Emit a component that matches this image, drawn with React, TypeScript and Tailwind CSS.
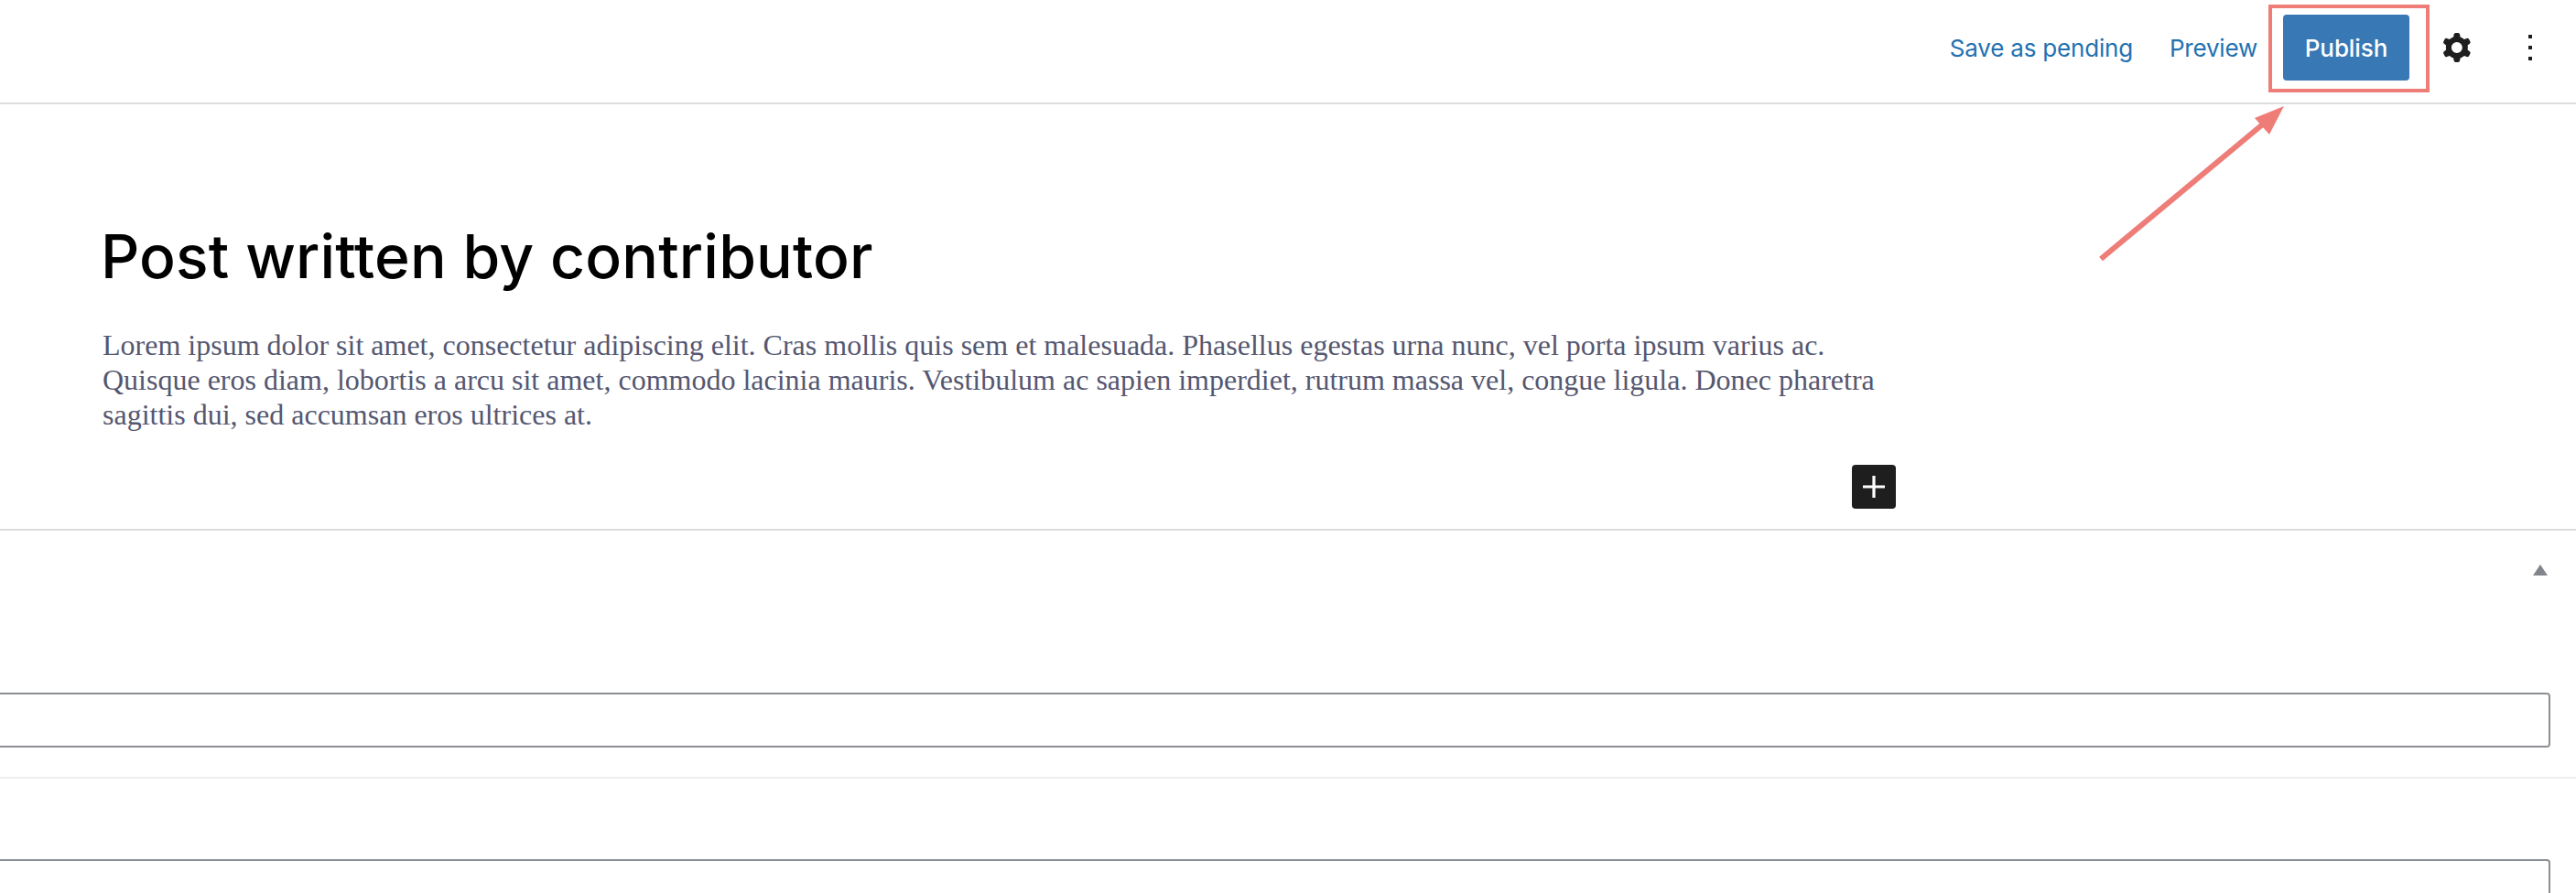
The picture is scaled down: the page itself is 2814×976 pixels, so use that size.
import React from 'react';

const CogIcon = () => (
  <svg width="48" height="48" viewBox="0 0 24 24" fill="#1e1e1e">
    <path
      fillRule="evenodd"
      clipRule="evenodd"
      d="M10.289 4.836A1 1 0 0111.275 4h1.306a1 1 0 01.987.836l.244 1.466c.787.26 1.503.679 2.108 1.218l1.393-.522a1 1 0 011.216.437l.653 1.13a1 1 0 01-.23 1.273l-1.148.944a6.025 6.025 0 010 2.435l1.149.946a1 1 0 01.23 1.272l-.653 1.13a1 1 0 01-1.216.437l-1.394-.522c-.605.54-1.32.958-2.108 1.218l-.244 1.466a1 1 0 01-.987.836h-1.306a1 1 0 01-.986-.836l-.244-1.466a5.995 5.995 0 01-2.108-1.218l-1.394.522a1 1 0 01-1.217-.436l-.653-1.131a1 1 0 01.23-1.272l1.149-.946a6.026 6.026 0 010-2.435l-1.148-.944a1 1 0 01-.23-1.272l.653-1.131a1 1 0 011.217-.437l1.393.522a5.994 5.994 0 012.108-1.218l.244-1.466zM14.929 12a3 3 0 11-6 0 3 3 0 016 0z"
    />
  </svg>
);

const MoreIcon = () => (
  <svg width="48" height="48" viewBox="0 0 24 24" fill="#1e1e1e">
    <path d="M13 19h-2v-2h2v2zm0-6h-2v-2h2v2zm0-6h-2V5h2v2z" />
  </svg>
);

const PlusIcon = () => (
  <svg width="48" height="48" viewBox="0 0 24 24" fill="#ffffff">
    <path d="M18 11.2h-5.2V6h-1.6v5.2H6v1.6h5.2V18h1.6v-5.2H18z" />
  </svg>
);

// the red callout around Publish and the arrow pointing at it
const Annotation = () => (
  <>
    <div className="absolute left-[2478px] top-[5px] w-[176px] h-[96px] border-[4px] border-[#ee7d78]" />
    <svg className="absolute left-[2280px] top-[105px]" width="230" height="190" viewBox="0 0 230 190">
      <line x1="15" y1="178" x2="200" y2="24" stroke="#ee7d78" strokeWidth="6" />
      <polygon points="215,11 199,42 183,24" fill="#ee7d78" />
    </svg>
  </>
);

const Header = () => (
  <header className="h-[114px] border-b-2 border-[#dcdcde] flex items-start justify-end pr-[26px] pt-[16px] font-['Inter',sans-serif]">
    <a className="mt-[15px] text-[26px] leading-[44px] text-[#2271b1] mr-[40px] tracking-[-0.2px]">Save as pending</a>
    <a className="mt-[15px] text-[26px] leading-[44px] text-[#2271b1] mr-[28px] tracking-[-0.2px]">Preview</a>
    <button className="w-[138px] h-[72px] bg-[#3878b4] rounded-[4px] text-white text-[26px] font-medium tracking-[-0.1px] mr-[28px]">
      Publish
    </button>
    <div className="flex mt-[12px] gap-[32px]">
      <CogIcon />
      <MoreIcon />
    </div>
  </header>
);

const Editor = () => (
  <main className="h-[466px] border-b-2 border-[#dcdcde] pl-[110px] pt-[128px] relative">
    <h1 className="text-[66px] leading-[76px] font-medium text-black font-['Inter',sans-serif] tracking-[0.15px]">
      Post written by contributor
    </h1>
    <p className="ml-[2px] mt-[40px] w-[1940px] text-[32px] leading-[38px] text-[#555770] font-['Liberation_Serif',serif]">
      Lorem ipsum dolor sit amet, consectetur adipiscing elit. Cras mollis quis sem et malesuada. Phasellus egestas urna
      nunc, vel porta ipsum varius ac. Quisque eros diam, lobortis a arcu sit amet, commodo lacinia mauris. Vestibulum
      ac sapien imperdiet, rutrum massa vel, congue ligula. Donec pharetra sagittis dui, sed accumsan eros ultrices at.
    </p>
    <button className="absolute left-[2023px] top-[394px] w-[48px] h-[48px] bg-[#1e1e1e] rounded-[4px]">
      <PlusIcon />
    </button>
  </main>
);

const Metabox = () => (
  <section className="pr-[28px]">
    <div className="h-[177px] flex justify-end pt-[37px] pr-[3px]">
      <div className="w-0 h-0 border-l-[8px] border-r-[8px] border-b-[12px] border-l-transparent border-r-transparent border-b-[#82868c]" />
    </div>
    <div className="h-[60px] border-2 border-l-0 border-[#8c8f94] rounded-r-[4px]" />
  </section>
);

export default function App() {
  return (
    <div className="relative w-[2814px] h-[976px] bg-white overflow-hidden">
      <Header />
      <Editor />
      <Metabox />
      <div className="h-[34px] border-b-2 border-[#eeeeee]" />
      <div className="pr-[28px] pt-[88px]">
        <div className="h-[61px] border-2 border-l-0 border-[#8c8f94] rounded-r-[4px]" />
      </div>
      <Annotation />
    </div>
  );
}
